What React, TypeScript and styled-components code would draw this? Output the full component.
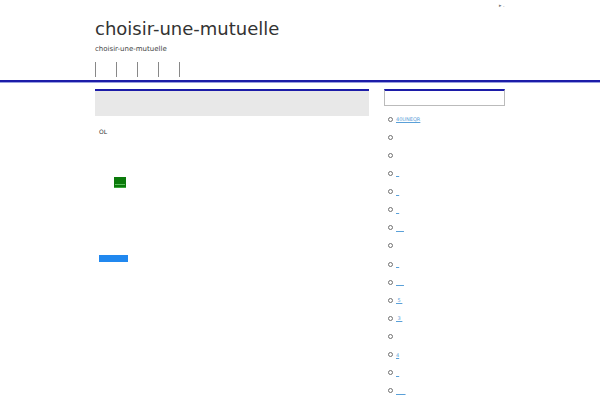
import React from "react";
import styled, { createGlobalStyle } from "styled-components";

const Global = createGlobalStyle`
  html, body { margin: 0; padding: 0; background: #fff; }
  body { font-family: "DejaVu Sans", "Liberation Sans", sans-serif; color: #333; }
`;

const Page = styled.div`
  width: 600px;
  min-height: 400px;
  position: relative;
  overflow: hidden;
`;

const TopMark = styled.div`
  position: absolute;
  top: 2px;
  left: 499px;
  font-size: 5px;
  color: #777;
`;

const Header = styled.header`
  padding-top: 18px;
`;

const Wrap = styled.div`
  width: 410px;
  margin-left: 95px;
`;

const Title = styled.h1`
  margin: 0;
  font-size: 18px;
  font-weight: normal;
  line-height: 22px;
  color: #333;
`;

const Sub = styled.p`
  margin: 5px 0 0;
  font-size: 7px;
  line-height: 9px;
  color: #444;
`;

const Nav = styled.nav`
  display: flex;
  margin-top: 8px;
  height: 15px;
`;

const NavItem = styled.span`
  width: 20px;
  border-left: 1px solid #888;
  height: 15px;
`;

const Rule = styled.div`
  margin-top: 3px;
  height: 2px;
  background: #1c1ca8;
  border-bottom: 1px solid #9aa0e0;
`;

const Body = styled.div`
  display: flex;
  gap: 15px;
  margin-top: 6px;
`;

const Main = styled.main`
  width: 274px;
`;

const Banner = styled.div`
  height: 25px;
  background: #e8e8e8;
  border-top: 2px solid #1c1ca8;
`;

const Text = styled.p`
  margin: 12px 0 0 4px;
  font-size: 6px;
  line-height: 8px;
  color: #333;
`;

const GreenBox = styled.div`
  margin: 41px 0 0 19px;
  width: 12px;
  height: 11px;
  background: #0b7a0b;
  border-bottom: 1px solid #3aa83a;
  box-sizing: border-box;
  position: relative;
  &::after {
    content: "";
    position: absolute;
    left: 1px;
    right: 1px;
    bottom: 2px;
    height: 1px;
    background: #5bbf5b;
  }
`;

const BlueButton = styled.div`
  margin: 67px 0 0 4px;
  width: 29px;
  height: 7px;
  background: #2188ef;
`;

const Side = styled.aside`
  width: 121px;
`;

const SearchBox = styled.div`
  height: 14px;
  border: 1px solid #bbb;
  border-top: 2px solid #1c1ca8;
`;

const List = styled.ul`
  list-style: none;
  margin: 4px 0 0;
  padding: 0 0 0 4px;
`;

const Item = styled.li`
  display: flex;
  align-items: center;
  gap: 3px;
  height: 18.13px;
`;

const Bullet = styled.span`
  width: 3px;
  height: 3px;
  border: 1.5px solid #707070;
  border-radius: 50%;
  flex: none;
`;

const Link = styled.a`
  font-size: 5px;
  line-height: 6px;
  color: #5aa0d8;
  text-decoration: underline;
`;

const items: string[] = [
  "40UNEQR",
  "",
  "",
  "\u00a0\u00a0",
  "\u00a0\u00a0",
  "\u00a0\u00a0",
  "\u00a0\u00a0\u00a0\u00a0\u00a0",
  "",
  "\u00a0\u00a0",
  "\u00a0\u00a0\u00a0\u00a0\u00a0",
  "\u00a05\u00a0",
  "\u00a03\u00a0",
  "",
  "4",
  "\u00a0\u00a0",
  "\u00a0\u00a0\u00a0\u00a0\u00a0\u00a0",
];

export default function App() {
  return (
    <Page>
      <Global />
      <TopMark>▸ .</TopMark>
      <Header>
        <Wrap>
          <Title>choisir-une-mutuelle</Title>
          <Sub>choisir-une-mutuelle</Sub>
          <Nav>
            <NavItem />
            <NavItem />
            <NavItem />
            <NavItem />
            <NavItem />
          </Nav>
        </Wrap>
      </Header>
      <Rule />
      <Wrap>
        <Body>
          <Main>
            <Banner />
            <Text>OL</Text>
            <GreenBox />
            <BlueButton />
          </Main>
          <Side>
            <SearchBox />
            <List>
              {items.map((t, i) => (
                <Item key={i}>
                  <Bullet />
                  {t && <Link href="#">{t}</Link>}
                </Item>
              ))}
            </List>
          </Side>
        </Body>
      </Wrap>
    </Page>
  );
}
